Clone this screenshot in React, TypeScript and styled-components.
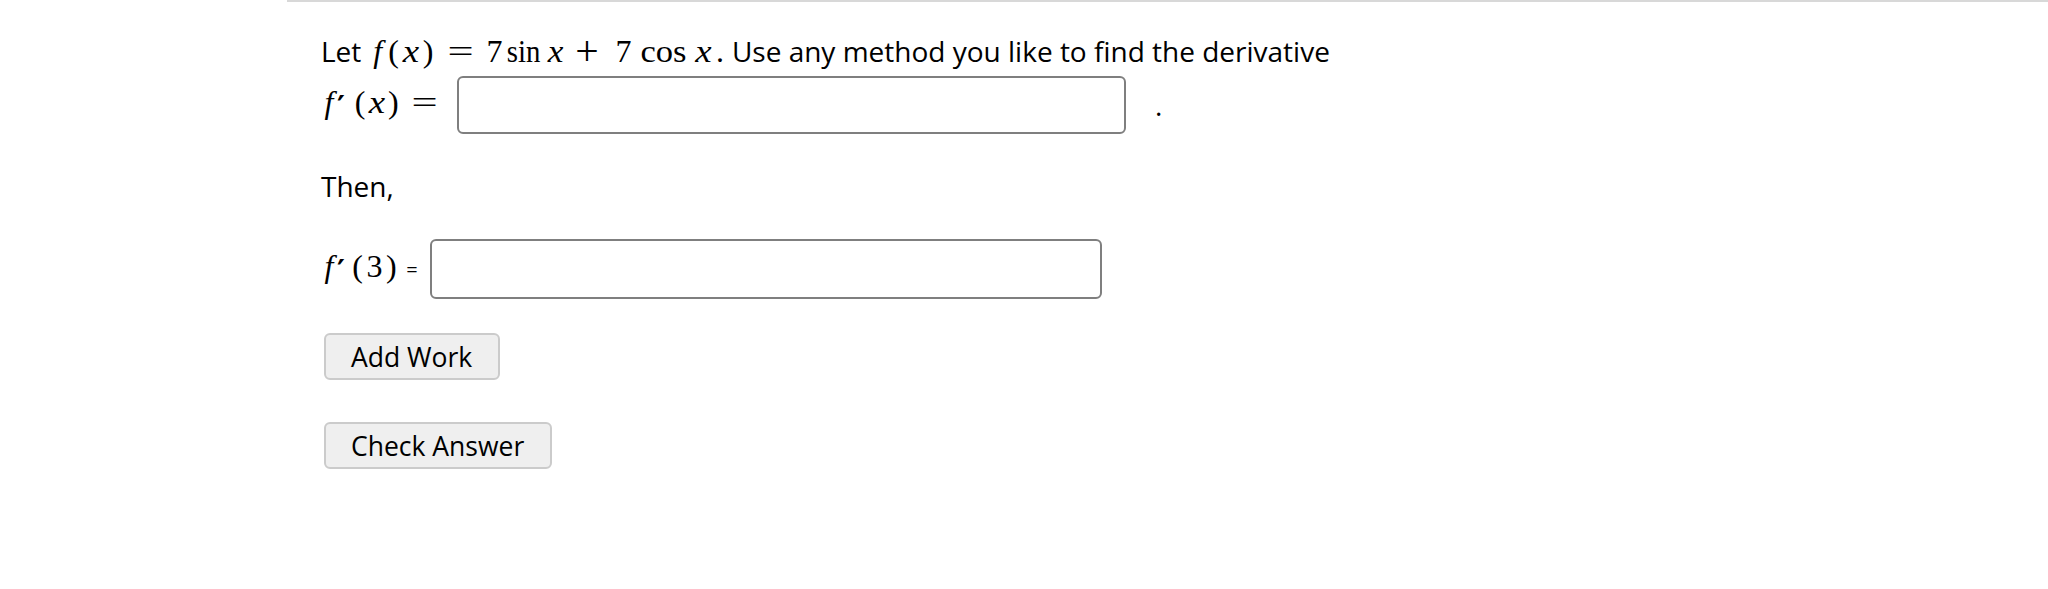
import React from "react";
import styled, { createGlobalStyle } from "styled-components";

const GlobalStyle = createGlobalStyle`
  html, body {
    margin: 0;
    padding: 0;
    background: #ffffff;
  }
  body {
    font-family: "Open Sans", "Noto Sans", sans-serif;
    color: #000;
  }
`;

const Page = styled.div`
  margin-left: 287px;
  border-top: 2px solid #d8d8d8;
  padding: 29px 0 0 34px;
  min-height: 587px;
  box-sizing: border-box;
`;

const TextLine = styled.div<{ $mt?: number }>`
  font-family: "Open Sans", "Noto Sans", sans-serif;
  font-size: 28px;
  line-height: 40px;
  white-space: nowrap;
  margin-top: ${(p) => p.$mt ?? 0}px;
`;

const Math = styled.span`
  font-family: "Liberation Serif", "DejaVu Serif", serif;
  font-size: 32px;
  white-space: nowrap;
`;

const Atom = styled.span<{ $w: number; $ml?: number; $it?: boolean; $sx?: number; $sy?: number }>`
  display: inline-block;
  width: ${(p) => p.$w}px;
  margin-left: ${(p) => p.$ml ?? 0}px;
  text-align: center;
  font-style: ${(p) => (p.$it ? "italic" : "normal")};
  transform: scale(${(p) => p.$sx ?? 1}, ${(p) => p.$sy ?? 1});
`;

const Prime = styled.span`
  display: inline-block;
  width: 6px;
  font-family: "DejaVu Sans", sans-serif;
  font-style: normal;
  font-weight: bold;
  font-size: 30px;
  text-align: left;
  vertical-align: -4px;
`;

const AnswerRow = styled.div<{ $mt: number }>`
  display: flex;
  align-items: center;
  margin-top: ${(p) => p.$mt}px;
`;

const Label = styled.span`
  white-space: nowrap;
  line-height: 40px;
  padding-bottom: 1px;
`;

const SmallEq = styled.span`
  display: inline-block;
  width: 38px;
  text-align: center;
  font-family: "Open Sans", "Noto Sans", sans-serif;
  font-size: 20px;
`;

const AnswerInput = styled.input<{ $w: number; $h: number; $ml: number }>`
  box-sizing: border-box;
  width: ${(p) => p.$w}px;
  height: ${(p) => p.$h}px;
  margin: 0 0 0 ${(p) => p.$ml}px;
  border: 2px solid #7f7f7f;
  border-radius: 6px;
  background: #fff;
  padding: 0 10px;
  font-size: 24px;
  outline: none;
`;

const Period = styled.span`
  font-family: "Open Sans", "Noto Sans", sans-serif;
  font-size: 28px;
  margin-left: 29px;
`;

const ButtonStack = styled.div`
  display: flex;
  flex-direction: column;
  align-items: flex-start;
  gap: 42px;
  margin-top: 34px;
  margin-left: 3px;
`;

const ActionButton = styled.button`
  box-sizing: border-box;
  height: 47px;
  padding: 0 26px 0 25px;
  margin: 0;
  font-family: "Open Sans", "Noto Sans", sans-serif;
  font-size: 26.5px;
  color: #000;
  background: #efefef;
  border: 2px solid #cbcbcb;
  border-radius: 6px;
  cursor: pointer;
`;

export default function App() {
  return (
    <>
      <GlobalStyle />
      <Page>
        <TextLine>
          Let{" "}
          <Math>
            <Atom $w={18} $it>f</Atom>
            <Atom $w={14}>(</Atom>
            <Atom $w={20} $it $sx={1.15}>x</Atom>
            <Atom $w={15}>)</Atom>
            <Atom $w={49} $sx={1.45}>=</Atom>
            <Atom $w={20}>7</Atom>
            <Atom $w={37} $sx={0.9}>sin</Atom>
            <Atom $w={27} $it $sx={1.1}>x</Atom>
            <Atom $w={36} $sx={1.3} $sy={1.3}>+</Atom>
            <Atom $w={18} $ml={10}>7</Atom>
            <Atom $w={61} $sx={1.08}>cos</Atom>
            <Atom $w={19} $it $sx={1.15}>x</Atom>
            <Atom $w={9} $ml={3}>.</Atom>
          </Math>{" "}
          Use any method you like to find the derivative
        </TextLine>
        <AnswerRow $mt={5}>
          <Label>
            <Math>
              <Atom $w={16} $it>f</Atom>
              <Prime>′</Prime>
              <Atom $w={12} $ml={11}>(</Atom>
              <Atom $w={22} $it $sx={1.15}>x</Atom>
              <Atom $w={10}>)</Atom>
              <Atom $w={53} $sx={1.45}>=</Atom>
            </Math>
          </Label>
          <AnswerInput $w={669} $h={58} $ml={6} aria-label="f'(x)" />
          <Period>.</Period>
        </AnswerRow>
        <TextLine $mt={32}>Then,</TextLine>
        <AnswerRow $mt={33}>
          <Label>
            <Math>
              <Atom $w={16} $it>f</Atom>
              <Prime>′</Prime>
              <Atom $w={11} $ml={9}>(</Atom>
              <Atom $w={23}>3</Atom>
              <Atom $w={7}>)</Atom>
            </Math>
          </Label>
          <SmallEq>=</SmallEq>
          <AnswerInput $w={672} $h={60} $ml={-1} aria-label="f'(3)" />
        </AnswerRow>
        <ButtonStack>
          <ActionButton>Add Work</ActionButton>
          <ActionButton>Check Answer</ActionButton>
        </ButtonStack>
      </Page>
    </>
  );
}
